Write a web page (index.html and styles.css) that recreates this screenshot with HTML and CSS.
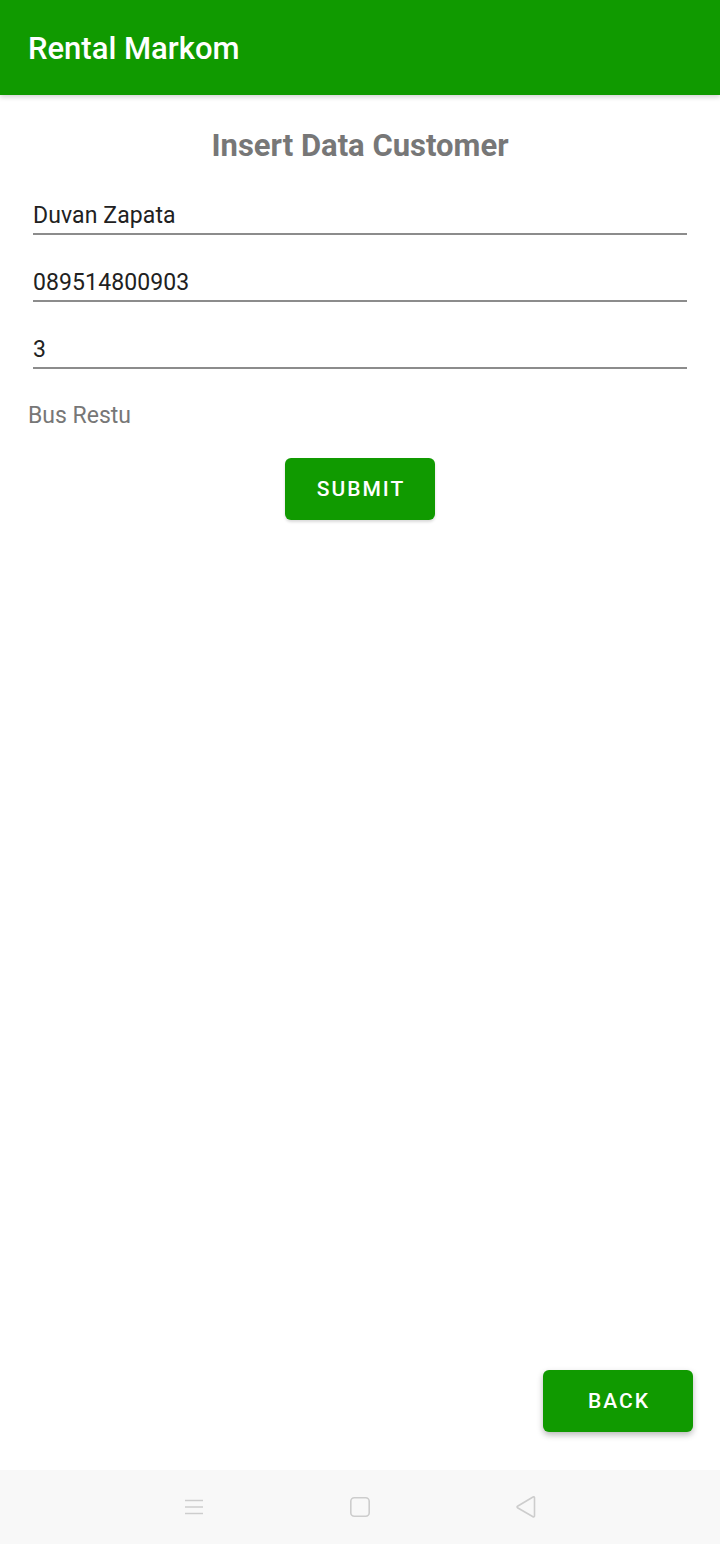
FILE: index.html
```html
<!DOCTYPE html>
<html>
<head>
<meta charset="utf-8">
<link rel="stylesheet" href="styles.css">
</head>
<body>
<div class="screen">
  <header class="appbar"><span class="appbar-title">Rental Markom</span></header>
  <main class="content">
    <h1 class="heading">Insert Data Customer</h1>
    <div class="form">
      <div class="field">Duvan Zapata</div>
      <div class="field">089514800903</div>
      <div class="field">3</div>
    </div>
    <div class="spinner">Bus Restu</div>
    <div class="submit-row"><button class="btn">SUBMIT</button></div>
    <div class="spacer"></div>
    <div class="back-row"><button class="btn btn-raised">BACK</button></div>
  </main>
  <nav class="navbar">
    <svg class="nav-icon" width="24" height="24" viewBox="0 0 24 24"><path d="M3 5.5h18M3 12h18M3 18.5h18" stroke="#cdcdcd" stroke-width="1.6" fill="none"/></svg>
    <svg class="nav-icon" width="24" height="24" viewBox="0 0 24 24"><rect x="2.8" y="2.8" width="18.4" height="18.4" rx="3.5" stroke="#cdcdcd" stroke-width="1.6" fill="none"/></svg>
    <svg class="nav-icon" width="24" height="24" viewBox="0 0 24 24"><path d="M20.5 2.5v18.5a1 1 0 0 1-1.5 .8L3.5 12.7a.8.8 0 0 1 0-1.4L19 2a1 1 0 0 1 1.5 .5z" stroke="#cdcdcd" stroke-width="1.6" fill="none" stroke-linejoin="round"/></svg>
  </nav>
</div>
</body>
</html>
```
FILE: styles.css
```css
html, body {
  margin: 0;
  padding: 0;
  background: #ffffff;
}
body {
  font-family: Roboto, "Noto Sans", sans-serif;
}
.screen {
  width: 720px;
  height: 1544px;
  display: flex;
  flex-direction: column;
  overflow: hidden;
}
.appbar {
  height: 95px;
  flex: 0 0 95px;
  background: #109a00;
  display: flex;
  align-items: center;
  padding-left: 28px;
  box-shadow: 0 2px 5px rgba(0,0,0,0.18);
  position: relative;
  z-index: 1;
}
.appbar-title {
  color: #ffffff;
  font-size: 31px;
  font-weight: 500;
  line-height: 36px;
  margin-top: 2px;
}
.content {
  flex: 1;
  display: flex;
  flex-direction: column;
}
.heading {
  margin: 33px 0 0 0;
  text-align: center;
  font-size: 31px;
  line-height: 36px;
  font-weight: 700;
  color: #777777;
}
.form {
  display: flex;
  flex-direction: column;
  gap: 34px;
  padding: 0 33px;
  margin-top: 38px;
}
.field {
  font-size: 23px;
  line-height: 27px;
  color: #212121;
  padding-bottom: 4px;
  border-bottom: 2px solid #8c8c8c;
  letter-spacing: 0.1px;
}
.spinner {
  margin-top: 33px;
  padding-left: 28px;
  font-size: 23px;
  line-height: 27px;
  color: #777777;
}
.submit-row {
  display: flex;
  justify-content: center;
  margin-top: 29px;
}
.btn {
  width: 150px;
  height: 62px;
  border: none;
  border-radius: 6px;
  background: #109a00;
  color: #ffffff;
  font-family: Roboto, "Noto Sans", sans-serif;
  font-size: 21px;
  font-weight: 500;
  letter-spacing: 2px;
  padding: 0 0 0 2px;
  box-shadow: 0 2px 3px rgba(0,0,0,0.15);
}
.btn-raised {
  box-shadow: 0 3px 6px rgba(0,0,0,0.28);
}
.spacer {
  flex: 1;
}
.back-row {
  display: flex;
  justify-content: flex-end;
  padding-right: 27px;
  margin-bottom: 38px;
}
.navbar {
  flex: 0 0 74px;
  height: 74px;
  background: #f8f8f8;
  display: flex;
  align-items: center;
  justify-content: center;
  gap: 142px;
}
.nav-icon {
  display: block;
}
```
